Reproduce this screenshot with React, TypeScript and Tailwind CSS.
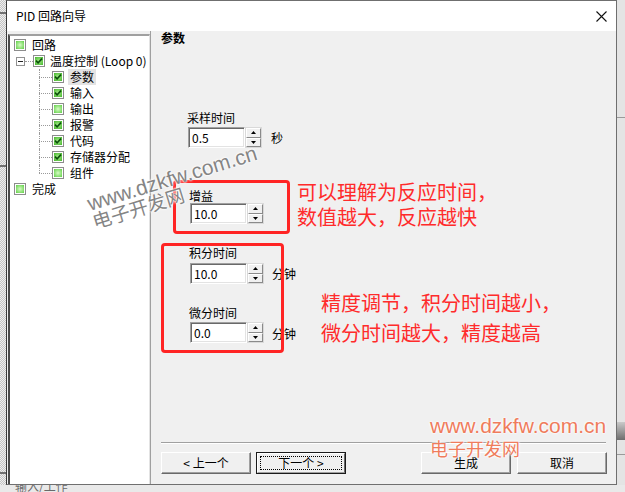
import React from 'react';

// tree check icon: green square, optionally ticked
function Box({ checked }: { checked?: boolean }) {
  return (
    <span className="flex w-[12px] h-[12px] shrink-0 border border-[#8c8c8c] bg-white p-px">
      {checked ? (
        <span className="flex flex-1 items-center justify-center bg-[radial-gradient(circle,#a6ec8a_0%,#45b52d_100%)]">
          <svg width="8" height="8" viewBox="0 0 8 8">
            <path d="M1 3.6L3.1 5.8L7 1.6" stroke="#0b4f0b" strokeWidth="1.6" fill="none" />
          </svg>
        </span>
      ) : (
        <span className="flex-1 bg-[radial-gradient(circle,#d6fcc4_0%,#5fce45_100%)]" />
      )}
    </span>
  );
}

function Leaf({ label, checked, last, selected }: { label: string; checked?: boolean; last?: boolean; selected?: boolean }) {
  return (
    <div className="h-[16px] flex items-center">
      <span className="w-[25px] shrink-0" />
      <span className="relative w-[13px] h-full shrink-0">
        <span
          className={
            last
              ? 'absolute left-0 top-0 h-[8px] border-l border-dotted border-[#9a9a9a]'
              : 'absolute left-0 top-0 h-full border-l border-dotted border-[#9a9a9a]'
          }
        />
        <span className="absolute left-0 top-[8px] w-full border-t border-dotted border-[#9a9a9a]" />
      </span>
      <Box checked={checked} />
      <span className={selected ? 'ml-[4px] px-[2px] bg-[#e3e3e3] leading-[16px]' : 'ml-[6px] leading-[16px]'}>{label}</span>
    </div>
  );
}

function Spin() {
  return (
    <div className="flex flex-col w-[17px] h-[21px] shrink-0 border border-[#d9d9d9] bg-[#f0f0f0]">
      <div className="flex-1 flex items-center justify-center border border-t-white border-l-white border-r-[#8a8a8a] border-b-[#8a8a8a]">
        <svg width="5" height="3" viewBox="0 0 5 3"><path d="M0 3H5L2.5 0Z" fill="#000" /></svg>
      </div>
      <div className="flex-1 flex items-center justify-center border border-t-white border-l-white border-r-[#8a8a8a] border-b-[#8a8a8a]">
        <svg width="5" height="3" viewBox="0 0 5 3"><path d="M0 0H5L2.5 3Z" fill="#000" /></svg>
      </div>
    </div>
  );
}

function Field({ value, unit, unitGap }: { value: string; unit?: string; unitGap: string }) {
  return (
    <div className="flex items-center">
      <div className="w-[57px] h-[21px] flex items-center pl-[2px] bg-white border border-t-[#a0a0a0] border-l-[#a0a0a0] border-r-white border-b-white shadow-[inset_1px_1px_0_#696969,inset_-1px_-1px_0_#e3e3e3]">
        <span className="pl-[1px] leading-[14px]">{value}</span>
      </div>
      <Spin />
      {unit && <span className={unitGap + ' leading-[14px]'}>{unit}</span>}
    </div>
  );
}

function Btn({ label, def }: { label: string; def?: boolean }) {
  return def ? (
    <div className="w-[90px] h-[22px] border border-[#1a1a1a] bg-[#f0f0f0] flex">
      <div className="flex-1 flex border border-t-white border-l-white border-r-[#696969] border-b-[#a0a0a0] p-[2px]">
        <div className="flex-1 flex items-center justify-center border border-dotted border-black">{label}</div>
      </div>
    </div>
  ) : (
    <div className="w-[90px] h-[22px] flex items-center justify-center bg-[#f0f0f0] border border-t-white border-l-white border-r-[#696969] border-b-[#696969] shadow-[inset_-1px_-1px_0_#a0a0a0]">
      {label}
    </div>
  );
}

export default function App() {
  return (
    <div className="relative w-[625px] h-[492px] overflow-hidden flex flex-col bg-[#e8e8e8] text-[12px] text-black font-['Noto_Sans_CJK_SC',sans-serif]">
      <div className="flex h-[485px]">
        {/* background app, left edge */}
        <div className="w-[6px] flex flex-col bg-[repeating-conic-gradient(#c4c4c4_0%_25%,#eeeeee_0%_50%)] bg-[length:2px_2px]">
          <div className="mt-[12px] h-[2px] bg-[#707070]" />
          <div className="mt-[151px] h-[2px] bg-[#707070]" />
          <div className="mt-[305px] h-[2px] bg-[#707070]" />
        </div>

        {/* dialog */}
        <div className="w-[611px] flex flex-col border border-[#6f6f6f] border-l-[#3a3a3a] bg-white">
          <div className="h-[30px] flex items-center justify-between pl-[9px] pr-[9px]">
            <span className="leading-[14px]">PID 回路向导</span>
            <svg width="11" height="11" viewBox="0 0 11 11">
              <path d="M0.5 0.5L10.5 10.5M10.5 0.5L0.5 10.5" stroke="#111" strokeWidth="1.1" />
            </svg>
          </div>

          <div className="flex-1 flex bg-[#f0f0f0]">
            {/* tree */}
            <div className="mt-[3px] ml-[1px] w-[142px] bg-white border-l-2 border-t-2 border-l-[#4a4a4a] border-t-[#a0a0a0] border-r border-r-[#e3e3e3] pl-[4px] pt-[1px]">
              <div className="h-[16px] flex items-center">
                <Box />
                <span className="ml-[6px] leading-[16px]">回路</span>
              </div>
              <div className="h-[16px] flex items-center">
                <span className="ml-[2px] w-[9px] h-[9px] shrink-0 border border-[#919191] bg-white flex items-center justify-center">
                  <span className="w-[5px] h-px bg-[#222]" />
                </span>
                <span className="w-[8px] border-t border-dotted border-[#9a9a9a]" />
                <Box checked />
                <span className="ml-[5px] leading-[16px]">温度控制 (Loop 0)</span>
              </div>
              <Leaf label="参数" checked selected />
              <Leaf label="输入" checked />
              <Leaf label="输出" />
              <Leaf label="报警" checked />
              <Leaf label="代码" checked />
              <Leaf label="存储器分配" checked />
              <Leaf label="组件" last />
              <div className="h-[16px] flex items-center">
                <Box />
                <span className="ml-[6px] leading-[16px]">完成</span>
              </div>
            </div>

            {/* page */}
            <div className="flex-1 flex flex-col border-l border-[#a0a0a0] pl-[10px] pr-[10px]">
              <div className="leading-[14px] font-bold">参数</div>

              <div className="mt-[66px] ml-[27px]">
                <div className="leading-[14px] -ml-px">采样时间</div>
                <div className="mt-[2px]">
                  <Field value="0.5" unit="秒" unitGap="ml-[9px]" />
                </div>
              </div>

              <div className="mt-[41px] ml-[29px]">
                <div className="leading-[14px] -ml-px">增益</div>
                <Field value="10.0" unitGap="" />
              </div>

              <div className="mt-[22px] ml-[29px]">
                <div className="leading-[14px] -ml-px">积分时间</div>
                <div className="mt-[3px]">
                  <Field value="10.0" unit="分钟" unitGap="ml-[8px]" />
                </div>
              </div>

              <div className="mt-[22px] ml-[29px]">
                <div className="leading-[14px] -ml-px">微分时间</div>
                <div className="mt-[2px]">
                  <Field value="0.0" unit="分钟" unitGap="ml-[8px] mt-[3px]" />
                </div>
              </div>

              <div className="flex-1" />
              <div className="h-px bg-[#a0a0a0]" />
              <div className="h-px bg-white" />
              <div className="mt-[8px] mb-[10px] -mr-px flex">
                <Btn label="< 上一个" />
                <div className="ml-[5px]">
                  <Btn label="下一个 >" def />
                </div>
                <div className="ml-auto">
                  <Btn label="生成" />
                </div>
                <div className="ml-[6px]">
                  <Btn label="取消" />
                </div>
              </div>
            </div>
          </div>
        </div>

        {/* background app, right edge */}
        <div className="w-[8px] flex flex-col bg-[#e4e4e4]">
          <div className="mt-[117px] h-px bg-[#9a9a9a]" />
          <div className="mt-[304px] h-[18px] bg-[linear-gradient(#c9c9c9,#6d6d6d)]" />
          <div className="mt-[14px] h-px bg-[#9a9a9a]" />
        </div>
      </div>

      {/* background app, bottom edge */}
      <div className="flex-1 bg-[#e9e9e9] overflow-hidden pl-[15px]">
        <div className="-mt-[6px] leading-[14px] text-[#6a6a6a]">输入/工作</div>
      </div>

      {/* annotation boxes */}
      <div className="absolute left-[173px] top-[180px] w-[117px] h-[54px] border-[3px] border-[#ff2424] rounded-[4px]" />
      <div className="absolute left-[161px] top-[243px] w-[123px] h-[110px] border-[3px] border-[#ff2424] rounded-[4px]" />

      {/* annotation text */}
      <div className="absolute left-[297px] top-[179px] text-[20px] leading-[25px] text-[#ff2b2b] whitespace-nowrap">
        <div>可以理解为反应时间，</div>
        <div>数值越大，反应越快</div>
      </div>
      <div className="absolute left-[321px] top-[288px] text-[20px] leading-[30px] text-[#ff2b2b] whitespace-nowrap">
        <div>精度调节，积分时间越小，</div>
        <div>微分时间越大，精度越高</div>
      </div>

      {/* watermark, rotated */}
      <div className="absolute left-[172px] top-[178px] -translate-x-1/2 -translate-y-1/2 -rotate-[17deg] whitespace-nowrap text-[21px] leading-none text-[#858585] font-['Liberation_Sans',sans-serif] [text-shadow:0_0_2px_#fff,0_0_2px_#fff,0_0_3px_#fff]">
        www.dzkfw.com.cn
      </div>
      <div className="absolute left-[138px] top-[207px] -translate-x-1/2 -translate-y-1/2 -rotate-[17deg] whitespace-nowrap text-[19px] leading-none text-[#858585] [text-shadow:0_0_2px_#fff,0_0_2px_#fff,0_0_3px_#fff]">
        电子开发网
      </div>

      {/* watermark, bottom right */}
      <div className="absolute left-[430px] top-[415px] whitespace-nowrap text-[21px] leading-none text-[#ef7c5c] font-['Liberation_Sans',sans-serif] [text-shadow:0_0_2px_#fff,0_0_2px_#fff,0_0_3px_#fff]">
        www.dzkfw.com.cn
      </div>
      <div className="absolute left-[430px] top-[439px] whitespace-nowrap text-[18px] leading-none text-[#ef7c5c] [text-shadow:0_0_2px_#fff,0_0_2px_#fff,0_0_3px_#fff]">
        电子开发网
      </div>
    </div>
  );
}
